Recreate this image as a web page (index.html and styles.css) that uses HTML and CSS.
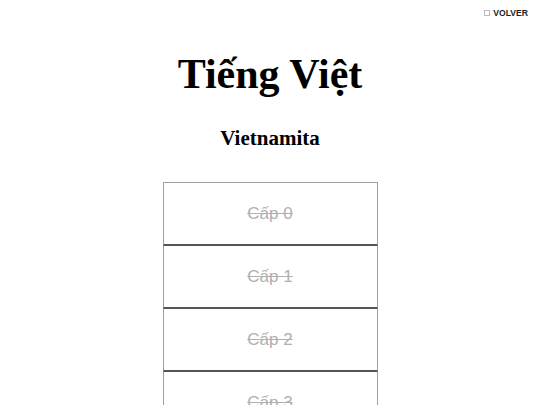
FILE: index.html
```html
<!DOCTYPE html>
<html lang="vi">
<head>
<meta charset="utf-8">
<link rel="stylesheet" href="styles.css">
</head>
<body>
<div class="topbar">
  <a class="back" href="#"><span class="box"></span>VOLVER</a>
</div>
<h1 class="title">Tiếng Việt</h1>
<h2 class="subtitle">Vietnamita</h2>
<div class="levels">
  <div class="level"><span>Cấp 0</span></div>
  <div class="level"><span>Cấp 1</span></div>
  <div class="level"><span>Cấp 2</span></div>
  <div class="level"><span>Cấp 3</span></div>
</div>
</body>
</html>
```
FILE: styles.css
```css
html, body {
  margin: 0;
  padding: 0;
  background: #fff;
  height: 405px;
  overflow: hidden;
}
body {
  font-family: "Liberation Serif", serif;
  color: #000;
}
.topbar {
  display: flex;
  justify-content: flex-end;
  padding: 6px 12px 0 0;
  height: 14px;
}
.back {
  display: flex;
  align-items: center;
  gap: 3px;
  font-family: "Liberation Sans", Arial, sans-serif;
  font-weight: bold;
  font-size: 8.6px;
  color: #222;
  text-decoration: none;
}
.box {
  width: 4px;
  height: 4px;
  border: 1px solid #bbb;
}
.title {
  margin: 31px 0 0;
  text-align: center;
  font-size: 42px;
  line-height: 46px;
  font-weight: bold;
}
.subtitle {
  margin: 29px 0 0;
  text-align: center;
  font-size: 21px;
  line-height: 24px;
  font-weight: bold;
}
.levels {
  width: 215px;
  margin: 32px auto 0;
  display: flex;
  flex-direction: column;
}
.level {
  flex: none;
  height: 61px;
  border: 1px solid #a0a0a0;
  border-bottom: 2px solid #555;
  border-top: none;
  display: flex;
  align-items: center;
  justify-content: center;
  font-family: "Liberation Sans", Arial, sans-serif;
  font-size: 17px;
  color: #b0b0b0;
  text-decoration: line-through;
}
.level:first-child {
  border-top: 1px solid #a0a0a0;
}
```
